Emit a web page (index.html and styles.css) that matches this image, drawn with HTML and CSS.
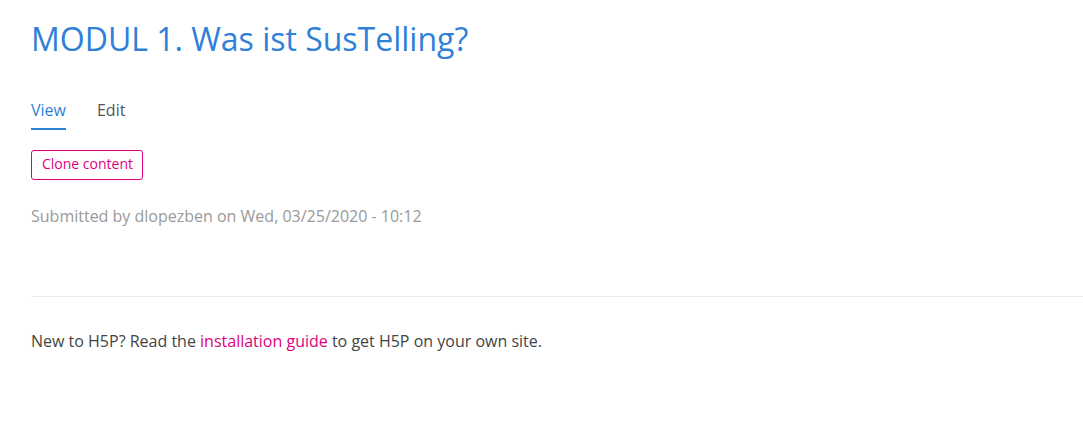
FILE: index.html
```html
<!DOCTYPE html>
<html>
<head>
<meta charset="utf-8">
<link rel="stylesheet" href="styles.css">
</head>
<body>
<div class="page">
  <h1 class="title">MODUL 1. Was ist SusTelling?</h1>
  <nav class="tabs">
    <a class="tab active" href="#">View</a>
    <a class="tab" href="#">Edit</a>
  </nav>
  <div class="actions"><a class="btn" href="#">Clone content</a></div>
  <div class="submitted">Submitted by dlopezben on Wed, 03/25/2020 - 10:12</div>
  <hr class="sep">
  <p class="note">New to H5P? Read the <a class="link" href="#">installation guide</a> to get H5P on your own site.</p>
</div>
</body>
</html>
```
FILE: styles.css
```css
html, body { margin: 0; padding: 0; background: #fff; }
body { font-family: "Open Sans", "Noto Sans", sans-serif; color: #444; }
.page { padding: 19px 0 0 31px; display: flex; flex-direction: column; align-items: flex-start; }
.title { margin: 0; font-size: 32px; line-height: 40px; font-weight: 400; color: #2f80d8; }
.tabs { display: flex; gap: 31px; margin-top: 39px; }
.tab { font-size: 16px; line-height: 24px; text-decoration: none; color: #555; padding-bottom: 6px; border-bottom: 2px solid transparent; }
.tab.active { color: #2f80d8; border-bottom-color: #2f80d8; }
.actions { margin-top: 20px; }
.btn { display: block; font-size: 14px; line-height: 20px; padding: 3px 9px 5px 10px; border: 1px solid #e0007f; border-radius: 3px; color: #e0007f; text-decoration: none; }
.submitted { margin-top: 24px; font-size: 16px; line-height: 24px; color: #999; }
.sep { align-self: stretch; margin: 68px 0 0 0; border: 0; border-top: 1px solid #ebebeb; height: 0; }
.note { margin: 32px 0 0 0; font-size: 16px; line-height: 24px; color: #444; }
.link { color: #e0007f; text-decoration: none; }
```
